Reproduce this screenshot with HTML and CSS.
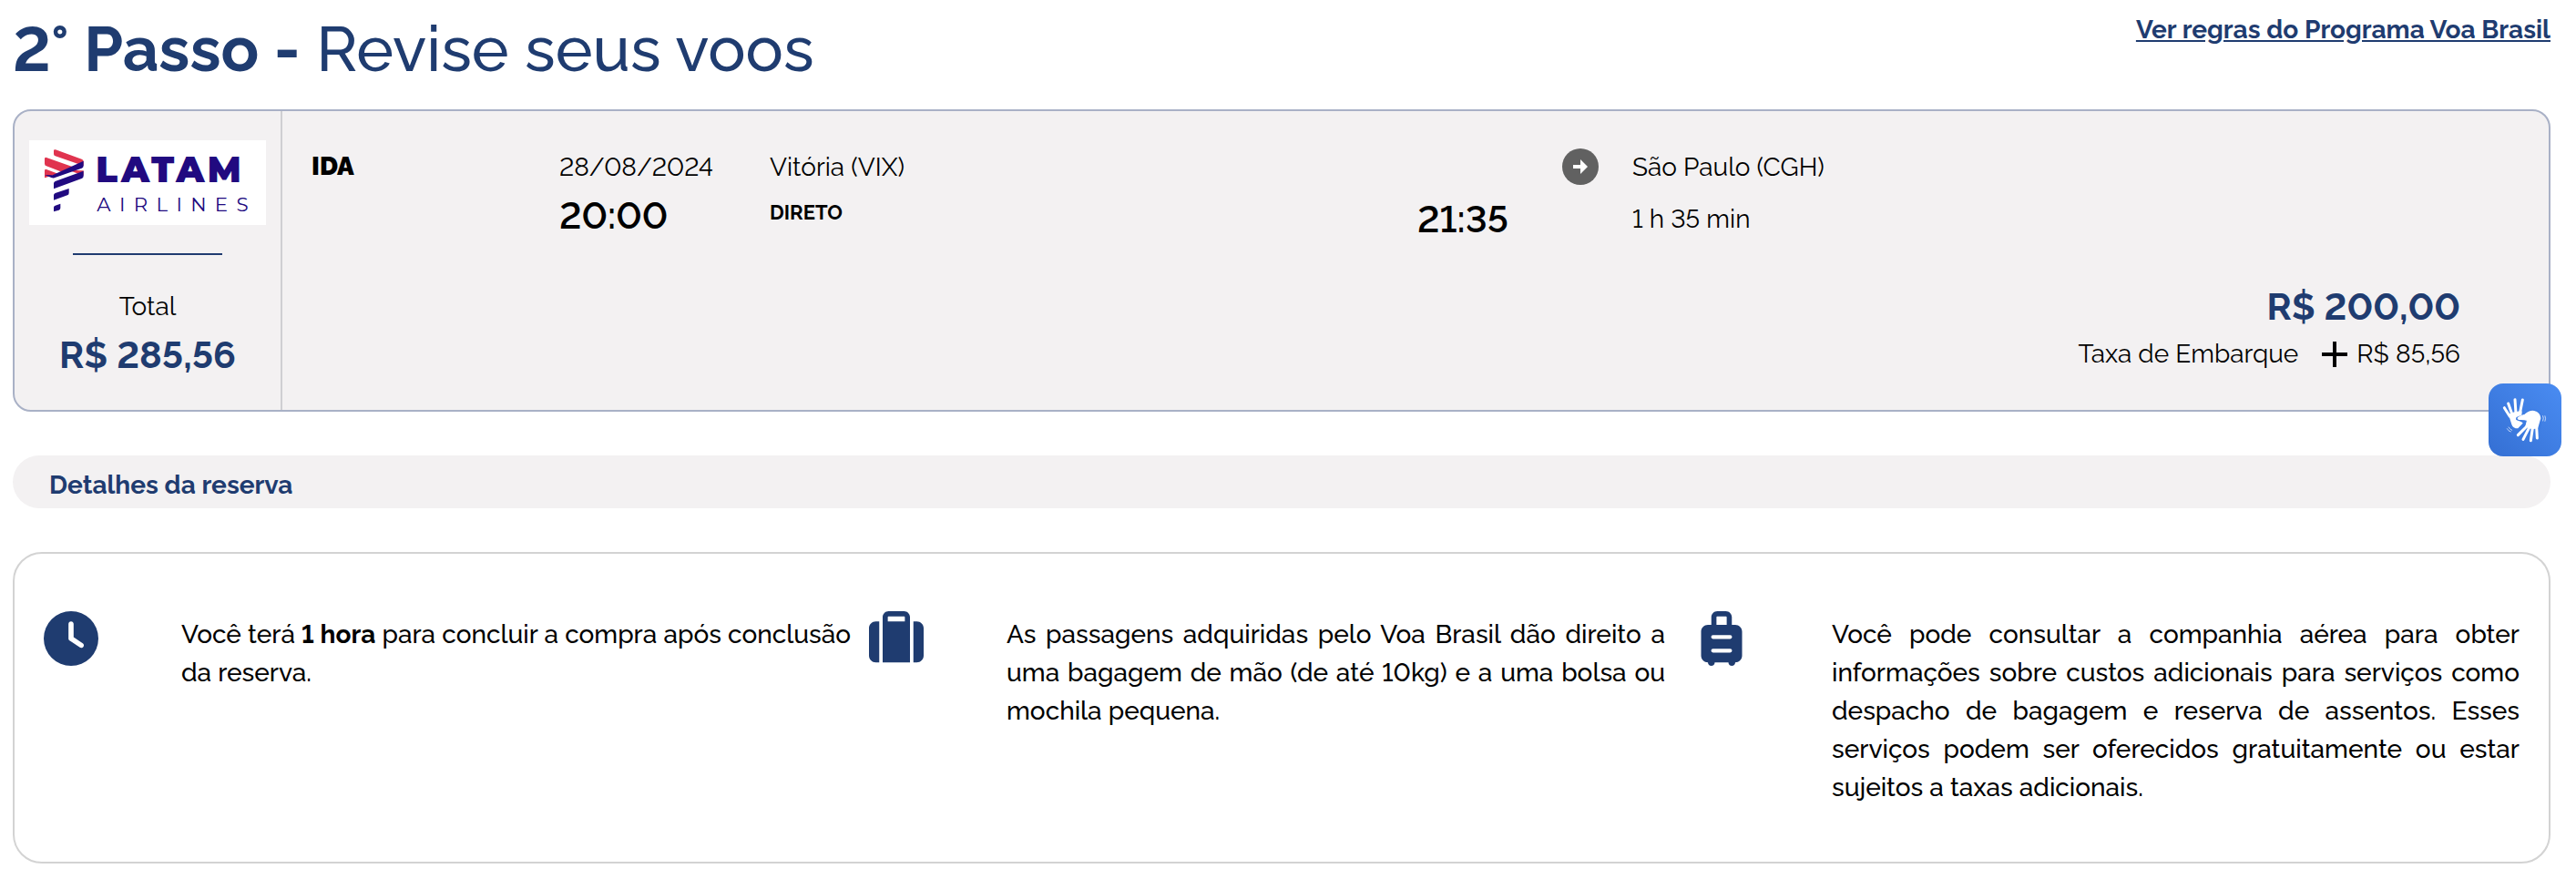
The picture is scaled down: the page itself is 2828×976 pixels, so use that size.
FILE: index.html
```html
<!DOCTYPE html>
<html lang="pt-BR">
<head>
    <meta charset="utf-8">
    <meta name="viewport" content="width=device-width, initial-scale=1">
    <title>Voa Brasil - Revise seus voos</title>
    <link rel="stylesheet" href="styles.css">
</head>
<body>
    <main class="page">
        <header class="header">
            <h1 class="title"><strong>2° Passo -</strong> Revise seus voos</h1>
            <a class="rules-link" href="#regras">Ver regras do Programa Voa Brasil</a>
        </header>

        <section class="flight-card">
            <div class="summary">
                <svg class="airline-logo" viewBox="18 18 780 279" role="img" aria-label="LATAM Airlines">
                    <g fill="#e0344f">
                        <path d="M99 52q0-5 6-3l86 31q6 2 6 8v14L104 70q-5-2-5-7z"/>
                        <path d="M69 79q0-6 6-4l100 35-42 15-58-22q-6-2-6-8z"/>
                        <path d="M69 118q0-6 6-4l38 14-44 14z"/>
                        <path d="M197 134l-50-18 50 2z"/>
                    </g>
                    <g fill="#210a80">
                        <path d="M69 132l26 1 102-47v16q0 6-6 8l-90 32q-5 1-10-1z"/>
                        <path d="M99 160q0-5 5-7l93-34v17q0 6-6 8l-92 34z"/>
                        <path d="M99 199q0-5 5-7l45-15v14q0 6-5 8l-45 16z"/>
                        <path d="M99 239q0-5 5-6l17-6v14q0 5-5 7l-17 5z"/>
                    </g>
                    <text class="logo-name" x="238" y="157">LATAM</text>
                    <text class="logo-sub" x="241" y="252">AIRLINES</text>
                </svg>
                <hr class="summary-line">
                <span class="summary-label">Total</span>
                <strong class="price">R$ 285,56</strong>
            </div>

            <div class="flight">
                <div class="route">
                    <strong class="direction">IDA</strong>
                    <span class="date">28/08/2024</span>
                    <span class="origin">Vitória (VIX)</span>
                    <svg class="arrow" viewBox="0 0 40 40" aria-hidden="true">
                        <circle cx="20" cy="20" r="20" fill="#616161"/>
                        <path d="M12 18h8v-6l8 8-8 8v-6h-8z" fill="#fff"/>
                    </svg>
                    <span class="destination">São Paulo (CGH)</span>
                    <span class="time departure">20:00</span>
                    <span class="stops">DIRETO</span>
                    <span class="time arrival">21:35</span>
                    <span class="duration">1 h 35 min</span>
                </div>
                <div class="fare">
                    <strong class="price">R$ 200,00</strong>
                    <div class="tax">
                        <span class="tax-label">Taxa de Embarque</span>
                        <svg class="plus" viewBox="0 0 28 28" aria-hidden="true">
                            <path d="M14 0v28M0 14h28" stroke="#000" stroke-width="4"/>
                        </svg>
                        <span>R$ 85,56</span>
                    </div>
                </div>
            </div>
        </section>

        <h2 class="section-title">Detalhes da reserva</h2>

        <section class="details">
            <div class="detail">
                <svg class="detail-icon" viewBox="0 0 512 512" aria-hidden="true">
                    <path d="M256 0a256 256 0 1 1 0 512A256 256 0 1 1 256 0zM232 120V256c0 8 4 15.500 10.700 20l96 64c11 7.400 25.900 4.400 33.300-6.700s4.400-25.900-6.700-33.300L280 243.200V120c0-13.300-10.700-24-24-24s-24 10.700-24 24z"/>
                </svg>
                <p class="detail-text">Você terá <strong>1 hora</strong> para concluir a compra após conclusão da reserva.</p>
            </div>
            <div class="detail">
                <svg class="detail-icon" viewBox="0 0 512 512" aria-hidden="true">
                    <path d="M176 56V96H336V56c0-4.400-3.600-8-8-8H184c-4.400 0-8 3.600-8 8zM128 96V56c0-30.900 25.100-56 56-56H328c30.900 0 56 25.100 56 56V480H128zM64 96H96V480H64c-35.300 0-64-28.700-64-64V160c0-35.300 28.700-64 64-64zM448 480H416V96h32c35.300 0 64 28.700 64 64V416c0 35.300-28.700 64-64 64z"/>
                </svg>
                <p class="detail-text">As passagens adquiridas pelo Voa Brasil dão direito a uma bagagem de mão (de até 10kg) e a uma bolsa ou mochila pequena.</p>
            </div>
            <div class="detail">
                <svg class="detail-icon" viewBox="-64 0 512 512" aria-hidden="true">
                    <path d="M144 56c0-4.400 3.600-8 8-8h80c4.400 0 8 3.600 8 8v72H144zm176 72H288V56c0-30.900-25.100-56-56-56H152C121.100 0 96 25.100 96 56v72H64c-35.300 0-64 28.700-64 64V416c0 35.300 28.700 64 64 64c0 17.700 14.300 32 32 32s32-14.300 32-32H256c0 17.700 14.300 32 32 32s32-14.300 32-32c35.300 0 64-28.700 64-64V192c0-35.300-28.700-64-64-64zM112 224H272a18 18 0 0 1 0 36H112a18 18 0 0 1 0-36zm0 128H272a18 18 0 0 1 0 36H112a18 18 0 0 1 0-36z"/>
                </svg>
                <p class="detail-text">Você pode consultar a companhia aérea para obter informações sobre custos adicionais para serviços como despacho de bagagem e reserva de assentos. Esses serviços podem ser oferecidos gratuitamente ou estar sujeitos a taxas adicionais.</p>
            </div>
        </section>
    </main>

    <button class="libras" type="button" aria-label="Conteúdo acessível em Libras">
        <svg class="libras-icon" viewBox="96 63 240 240" aria-hidden="true">
            <g fill="#fff" stroke="#fff" stroke-linecap="round" stroke-linejoin="round">
                <path d="M166 172l-18-29M174 166l-13-37M186 162l-3-46M199 162l9-45" fill="none" stroke-width="9"/>
                <path d="M164 166q12-8 40-10l-1 14q-14 2-14 10 12 6 19 12l-16 17q-14 0-18-12z" stroke-width="4"/>
            </g>
            <path d="M192 179q14-6 24-10 16-18 32-13 17 6 19 22l-7 40-42 0-14-4 12-16q2-12-24-19z" fill="#3d7ce2" stroke="#3d7ce2" stroke-width="12" stroke-linejoin="round"/>
            <g fill="#fff" stroke="#fff" stroke-linecap="round" stroke-linejoin="round">
                <path d="M222 204l-29 29M230 208l-20 39M241 210l-6 41M254 206l2 37" fill="none" stroke-width="9"/>
                <path d="M194 176q10-7 22-10 16-14 30-11 18 4 20 22l-9 31q-18 8-38-4l5-20q-10-4-28-3-5-2-2-5z" stroke-width="4"/>
            </g>
            <path d="M275 170q4 7 0 16M282 170q4 8 0 17M162 207q4 7 11 10M157 212q4 8 12 10" fill="none" stroke="#fff" stroke-width="2" stroke-linecap="round"/>
        </svg>
    </button>
</body>
</html>
```
FILE: styles.css
```css
* {
    box-sizing: border-box;
}

body {
    margin: 0;
    background-color: #fff;
    color: #000;
    font-family: Raleway, "Open Sans", sans-serif;
    font-size: 28px;
    line-height: 42px;
    font-variant-numeric: lining-nums;
}

.page {
    padding: 12px 28px 28px 14px;
}

.header {
    display: flex;
    justify-content: space-between;
    align-items: flex-start;
    margin-bottom: 24px;
    color: #1f3c70;
}

.title {
    margin: 0;
    font-size: 69px;
    line-height: 84px;
    font-weight: 500;
}

.title strong {
    font-weight: 700;
}

.rules-link {
    color: #1f3c70;
    font-weight: 700;
}

.flight-card {
    display: flex;
    background-color: #f3f1f2;
    border: 2px solid #a9b1c6;
    border-radius: 20px;
}

.summary {
    display: flex;
    flex-direction: column;
    align-items: center;
    padding: 32px 16px 34px;
    border-right: 2px solid #cfcfd2;
}

.airline-logo {
    width: 260px;
    height: 93px;
    background-color: #fff;
}

.logo-name,
.logo-sub {
    fill: #210a80;
    font-family: Montserrat, "Open Sans", sans-serif;
}

.logo-name {
    font-size: 116px;
    font-weight: 900;
    letter-spacing: 10px;
}

.logo-sub {
    font-size: 64px;
    letter-spacing: 28px;
}

.summary-line {
    width: 164px;
    margin: 31px 0 36px;
    border: none;
    border-top: 2px solid #1f3c70;
}

.summary-label {
    margin-bottom: 6px;
}

.price {
    color: #1f3c70;
    font-size: 41px;
    line-height: 52px;
    font-weight: 700;
}

.flight {
    flex: 1;
    display: flex;
    flex-direction: column;
    justify-content: space-between;
    padding: 41px 97px 40px 32px;
}

.route {
    display: grid;
    grid-template-columns: 272fr 231fr 711fr 159fr 77fr 909fr;
    row-gap: 8px;
    align-items: start;
}

.direction {
    font-weight: 900;
    line-height: 40px;
}

.arrow {
    grid-column: 5;
    width: 40px;
    height: 40px;
}

.time {
    font-size: 41px;
    line-height: 48px;
    font-weight: 600;
}

.departure {
    grid-column: 2;
}

.stops {
    font-size: 22px;
    line-height: 40px;
    font-weight: 700;
}

.arrival {
    line-height: 56px;
}

.duration {
    grid-column: 6;
    line-height: 56px;
}

.fare {
    display: flex;
    flex-direction: column;
    align-items: flex-end;
    gap: 5px;
}

.tax {
    display: flex;
    align-items: center;
}

.plus {
    width: 28px;
    height: 28px;
    margin: 0 10px 0 26px;
}

.section-title {
    margin: 48px 0;
    padding: 12px 40px 4px;
    background-color: #f3f1f2;
    border-radius: 29px;
    color: #1f3c70;
    font-size: 28px;
    font-weight: 700;
}

.details {
    display: grid;
    grid-template-columns: repeat(3, 1fr);
    padding: 63px 32px 60px;
    border: 2px solid #d3d3d3;
    border-radius: 32px;
}

.detail {
    display: grid;
    grid-template-columns: 1fr 5fr;
    align-items: start;
}

.detail-icon {
    width: 60px;
    height: 60px;
    fill: #1f3c70;
}

.detail-text {
    margin: 5px 0 0;
    padding-right: 20px;
    font-weight: 500;
    text-align: justify;
}

.detail:nth-child(2) .detail-text {
    padding-right: 32px;
}

.detail:last-child .detail-text {
    padding-right: 0;
}

/* floats over the page, next to the right edge */
.libras {
    position: fixed;
    top: 421px;
    right: 16px;
    width: 80px;
    height: 80px;
    padding: 0;
    border: none;
    border-radius: 16px;
    background: linear-gradient(45deg, #346fd3, #4a8cf2);
    cursor: pointer;
}

.libras-icon {
    display: block;
    width: 80px;
    height: 80px;
}
```
